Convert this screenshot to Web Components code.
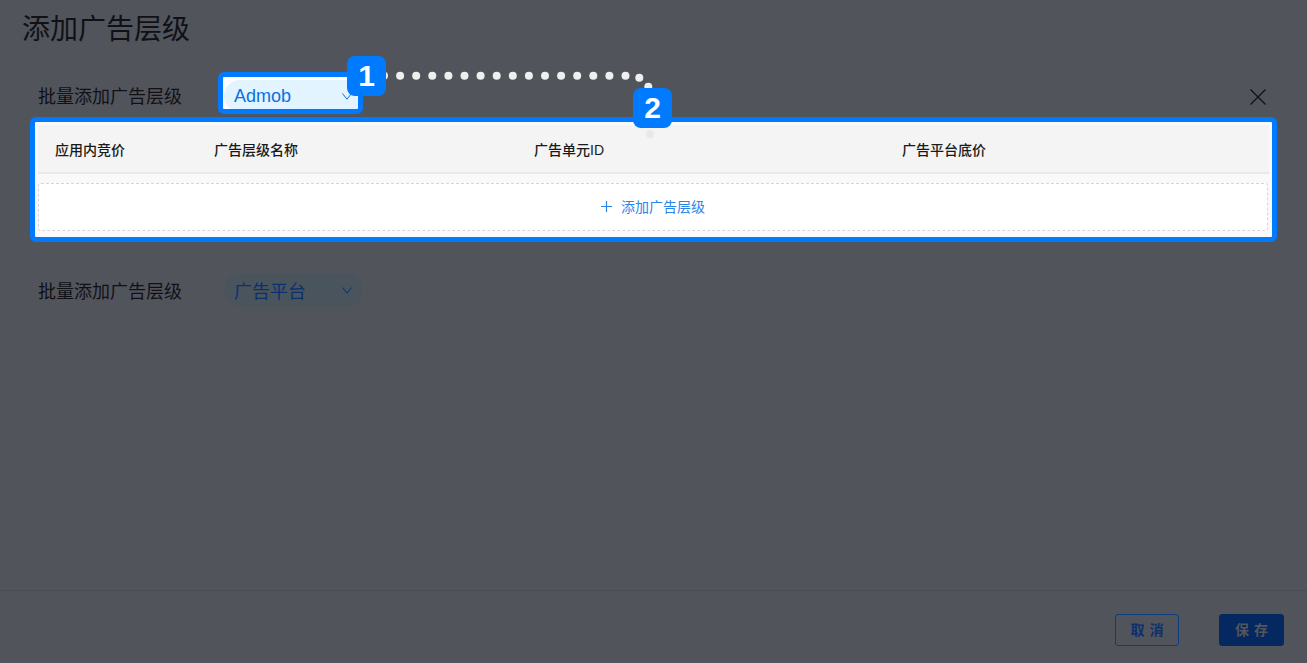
<!DOCTYPE html>
<html lang="zh"><head><meta charset="utf-8"><title>添加广告层级</title>
<style>
html,body{margin:0;height:100%;overflow:hidden}
body{background:#52545c;font-family:"Liberation Sans","Noto Sans CJK SC",sans-serif}
</style></head><body>
<tier-page>
  <h-title slot="title">添加广告层级</h-title>
  <tier-row slot="rows" style="--top:12px;--bottom:-2px" label="批量添加广告层级">
    <spot-frame slot="select"><tier-select active>Admob</tier-select></spot-frame>
    <close-icon slot="end"></close-icon>
  </tier-row>
  <tier-table slot="rows"></tier-table>
  <tier-row slot="rows" style="--top:24px;--bottom:12px;" label="批量添加广告层级">
    <tier-select slot="select">广告平台</tier-select>
  </tier-row>
  <foot-bar slot="footer"></foot-bar>
  <step-overlay slot="overlay"></step-overlay>
</tier-page>
<script>
const def=(name,html,extra)=>{customElements.define(name,class extends HTMLElement{
  constructor(){super();this.attachShadow({mode:'open'}).innerHTML=typeof html==='function'?html(this):html;}
  connectedCallback(){extra&&extra(this)}
})};
def('tier-page',`<style>
:host{display:flex;flex-direction:column;height:663px;position:relative;overflow:hidden}
.main{flex:1;min-height:0;padding:0 30px;display:flex;flex-direction:column}
.title{padding:14px 0 0 22px;height:59px;box-sizing:border-box}
</style>
<div class="title"><slot name="title"></slot></div>
<div class="main"><slot name="rows"></slot></div>
<slot name="footer"></slot><slot name="overlay"></slot>`);
def('h-title',`<style>:host{display:block;font-size:28px;line-height:32px;color:#101116}</style><slot></slot>`);
def('tier-row',el=>`<style>
:host{display:flex;align-items:center;height:48px;flex:none;margin-top:var(--top,0);margin-bottom:var(--bottom,0)}
.label{font-size:18px;color:#101116;margin-left:8px;width:180px;flex:none;white-space:nowrap}
.end{margin-left:auto;display:flex;margin-right:11px;margin-top:4px}
</style><span class="label">${el.getAttribute('label')}</span>
<slot name="select"></slot><span class="end"><slot name="end"></slot></span>`);
def('spot-frame',`<style>
:host{display:block;width:145px;height:42px;box-sizing:border-box;border:5px solid #007bff;border-radius:6px;background:#fff;overflow:hidden;margin-bottom:4px}
.in{padding:3px 0 0 0;width:150px}
</style><div class="in"><slot></slot></div>`);
def('tier-select',`<style>
:host{display:flex;align-items:center;justify-content:space-between;box-sizing:border-box;width:139px;height:32px;border-radius:16px;background:#4a545d;color:#0a3070;font-size:18px;padding:0 11px 0 10px;margin-left:6px}
:host([active]){background:#e1f4ff;color:#0b6fe0;margin-left:1px}
svg{width:10px;height:7px;fill:none;stroke:currentColor;stroke-width:1}
</style><slot></slot><svg viewBox="0 0 10 7"><path d="M.5.5L5 6.2 9.5.5"/></svg>`);
def('close-icon',`<style>:host{display:block;width:16px;height:16px}svg{display:block;width:16px;height:16px;fill:none;stroke:#101116;stroke-width:1.3}</style><svg viewBox="0 0 16 16"><path d="M.5.5l15 15M15.5.5l-15 15"/></svg>`);
def('tier-table',`<style>
:host{display:block;height:125px;box-sizing:border-box;border:5px solid #007bff;border-radius:6px;background:#f9f9f9;padding:3px 3px 0;flex:none}
.head{display:grid;grid-template-columns:159px 320px 368px 1fr;height:49px;align-items:center;background:#f4f4f4;border-bottom:2px solid #e9e9e9;box-sizing:border-box;padding:0 0 0 17px;font-size:14px;font-weight:500;color:#1a1a1a}
.add{margin:9px 1px 0 0;height:48px;box-sizing:border-box;border:1px dashed #d6d6d6;border-radius:3px;background:#fff;display:flex;align-items:center;justify-content:center;gap:9px;color:#2b84ea;font-size:14px;padding-bottom:2px}
svg{width:11px;height:11px;fill:none;stroke:currentColor;stroke-width:1.2}
</style><div class="head"><span>应用内竞价</span><span>广告层级名称</span><span>广告单元ID</span><span>广告平台底价</span></div>
<div class="add"><svg viewBox="0 0 11 11"><path d="M5.5 0v11M0 5.5h11"/></svg><span>添加广告层级</span></div>`);
def('foot-bar',`<style>
:host{display:flex;justify-content:flex-end;gap:40px;height:73px;box-sizing:border-box;border-top:1px solid #4b4d55;padding:23px 23px 0 0;font-size:14px;font-weight:700;letter-spacing:5px}
.b{width:64px;height:32px;box-sizing:border-box;border-radius:3px;border:1px solid #0b3d80;color:#0a3070;display:flex;align-items:center;justify-content:center;padding:0 0 2px 5px}
.p{width:65px;background:#04285f;border-color:#04285f;color:#53565e}
</style><span class="b">取消</span><span class="b p">保存</span>`);
def('step-overlay',`<style>
:host{position:absolute;inset:0;display:block;pointer-events:none}
svg{position:absolute;inset:0}
.n{position:absolute;width:39px;height:40px;border-radius:8px;background:#007bff;color:#fff;font-size:30px;font-weight:700;display:flex;align-items:center;justify-content:center}
</style><svg width="1307" height="663" id="s"></svg>
<div class="n" style="left:347px;top:56px">1</div><div class="n" style="left:633px;top:88px">2</div>`,el=>{
  const pts=[];for(let i=0;i<16;i++)pts.push([384+i*16.1,75.7]);pts.push([639.3,77.7],[648.3,86.7],[650,134]);
  el.shadowRoot.getElementById('s').innerHTML=pts.map(p=>`<circle cx="${p[0]}" cy="${p[1]}" r="4" fill="${p[1]>120?'#e9e9e9':'#efefef'}"/>`).join('');
});
</script></body></html>
